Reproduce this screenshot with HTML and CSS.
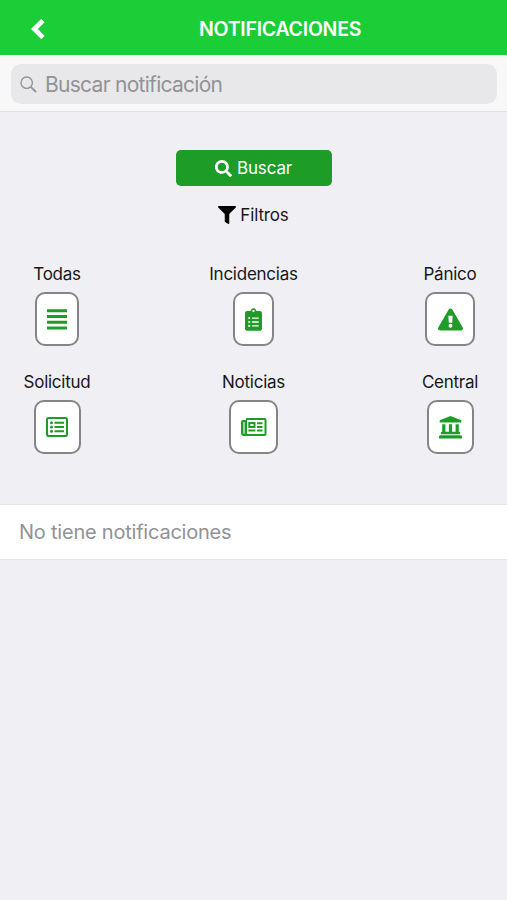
FILE: index.html
```html
<!DOCTYPE html>
<html lang="es">
<head>
<meta charset="utf-8">
<title>Notificaciones</title>
<link rel="stylesheet" href="styles.css">
</head>
<body>
<header class="navbar">
  <svg class="back" viewBox="0 0 14 20"><path d="M10.200 3.200 3.400 10l6.800 6.800" fill="none" stroke="#fff" stroke-width="4.800" stroke-linecap="square"/></svg>
  <h1 class="title">NOTIFICACIONES</h1>
</header>
<div class="searchbar">
  <div class="search-field">
    <svg class="search-icon" viewBox="0 0 17 17"><g fill="none" stroke="#929297" stroke-width="1.400"><circle cx="6.700" cy="6.700" r="5.700"/><path d="m10.800 10.800 5.200 5.200" stroke-width="1.900"/></g></svg>
    <span class="placeholder">Buscar notificación</span>
  </div>
</div>
<main>
  <button class="search-button">
    <svg class="glass" viewBox="0 0 512 512"><path fill="currentColor" d="M505 442.700 405.300 343c-4.500-4.500-10.600-7-17-7H372c27.600-35.300 44-79.700 44-128C416 93.100 322.900 0 208 0S0 93.100 0 208s93.100 208 208 208c48.300 0 92.700-16.400 128-44v16.300c0 6.400 2.500 12.500 7 17l99.700 99.700c9.400 9.400 24.600 9.400 33.900 0l28.300-28.300c9.400-9.400 9.400-24.600.1-34zM208 336c-70.700 0-128-57.200-128-128 0-70.700 57.200-128 128-128 70.700 0 128 57.200 128 128 0 70.700-57.200 128-128 128z"/></svg>
    <span>Buscar</span>
  </button>
  <div class="filters-title">
    <svg class="funnel" viewBox="0 0 512 512"><path d="M488 0H24C2.700 0-8 25.900 7.100 41L192 225.900V432c0 7.800 3.800 15.200 10.200 19.700l80 56C298 518.700 320 507.500 320 488V225.900L505 41C520 25.900 509.300 0 488 0z"/></svg>
    <span>Filtros</span>
  </div>
  <section class="filters">
    <div class="filter">
      <span class="label">Todas</span>
      <button class="tile w44"><svg width="20" height="21" viewBox="0 0 20 21"><path fill="currentColor" d="M0 .3h20v3H0zM0 6h20v3H0zM0 11.700h20v3H0zM0 17.400h20v3H0z"/></svg></button>
    </div>
    <div class="filter">
      <span class="label">Incidencias</span>
      <button class="tile w41"><svg width="17" height="23" viewBox="0 0 384 512"><path fill="currentColor" d="M336 64h-80c0-35.300-28.700-64-64-64s-64 28.700-64 64H48C21.500 64 0 85.500 0 112v352c0 26.500 21.500 48 48 48h288c26.500 0 48-21.500 48-48V112c0-26.500-21.500-48-48-48z"/><g fill="#fff"><circle cx="192" cy="64" r="26"/><circle cx="96" cy="224" r="24"/><circle cx="96" cy="312" r="24"/><circle cx="96" cy="400" r="24"/><path d="M160 208h150v32H160zM160 296h150v32H160zM160 384h150v32H160z"/></g></svg></button>
    </div>
    <div class="filter">
      <span class="label">Pánico</span>
      <button class="tile w50"><svg width="25" height="23" viewBox="0 0 576 512"><path fill="currentColor" d="M569.500 440c18.500 32-4.700 72-41.500 72H48c-36.900 0-60-40.100-41.600-72L246.400 24c18.500-32 64.700-32 83.200 0z"/><path fill="#fff" d="M239 168h98l-10 164h-78z"/><circle cx="288" cy="400" r="45" fill="#fff"/></svg></button>
    </div>
    <div class="filter">
      <span class="label">Solicitud</span>
      <button class="tile w47"><svg width="22" height="20" viewBox="0 0 22 20"><rect x="1" y="1" width="20" height="18" rx="1.800" fill="none" stroke="currentColor" stroke-width="2"/><g fill="currentColor"><circle cx="5.500" cy="5.800" r="1.500"/><circle cx="5.500" cy="10" r="1.500"/><circle cx="5.500" cy="14.200" r="1.500"/><path d="M8.500 4.800H18v2H8.500zM8.500 9H18v2H8.500zM8.500 13.200H18v2H8.500z"/></g></svg></button>
    </div>
    <div class="filter">
      <span class="label">Noticias</span>
      <button class="tile w49"><svg width="26" height="18" viewBox="0 0 26 18"><path d="M1 4q0-1 1-1h3v12q0 2-2 2-2 0-2-2z" fill="currentColor" fill-opacity=".45"/><path d="M5 2v13q0 2-2 2-2 0-2-2V4q0-1 1-1h3M5 1h18.500q1 0 1 1v14q0 1-1 1H3" fill="none" stroke="currentColor" stroke-width="2"/><path d="M8.300 5h5.200v4H8.300z" fill="none" stroke="currentColor" stroke-width="2"/><path fill="currentColor" d="M7.400 11.500h7v2h-7zM16 4.200h5.500v2H16zM16 7.900h5.500v2H16zM16 11.500h5.500v2H16z"/></svg></button>
    </div>
    <div class="filter">
      <span class="label">Central</span>
      <button class="tile w47"><svg width="23" height="23" viewBox="0 0 23 23"><path fill="currentColor" d="M11.500 0 22.300 4.200V6q0 .5-.7.500H1.400Q.700 6.500.7 6V4.200zM3.200 8.300h3.200v7.500h3.500V8.300h3.200v7.500h3.500V8.300h3.200v7.500q1.300 0 1.300 1.200v1.200H2V17q0-1.200 1.200-1.200zM1.400 19.300h20.200q1.400 0 1.400 1.500v1.700H0v-1.700q0-1.500 1.400-1.500z"/></svg></button>
    </div>
  </section>
  <div class="empty"><span>No tiene notificaciones</span></div>
</main>
</body>
</html>
```
FILE: styles.css
```css
* { box-sizing: border-box; }
body {
  margin: 0;
  min-height: 900px;
  background: #efeff4;
  color: #17171a;
  font-family: Inter, "Liberation Sans", sans-serif;
  font-size: 17px;
  letter-spacing: -0.150px;
}
button { border: 0; padding: 0; font: inherit; letter-spacing: inherit; }
svg { display: block; flex: none; }
.navbar {
  display: flex;
  align-items: center;
  height: 55px;
  padding: 2px 0 0 31px;
  background: #1bce38;
  color: #fff;
}
.back { width: 14px; height: 20px; }
.title {
  margin: 0 0 0 154px;
  font-size: 19.500px;
  font-weight: 600;
  line-height: 24px;
  letter-spacing: -0.250px;
}
.searchbar {
  height: 57px;
  padding: 9px 10px 0 11px;
  background: #f8f8f8;
  border-bottom: 1px solid #e0e0e3;
}
.search-field {
  display: flex;
  align-items: center;
  gap: 8px;
  height: 40px;
  padding-left: 9px;
  border-radius: 10px;
  background: #e8e8ea;
  color: #929295;
  font-size: 21px;
}
.search-icon { width: 17px; height: 17px; }
.placeholder { letter-spacing: -0.720px; }
main { padding-top: 38px; }
.search-button {
  display: flex;
  align-items: center;
  justify-content: center;
  gap: 5px;
  width: 156px;
  height: 36px;
  margin: 0 auto;
  border-radius: 5px;
  background: #1d9d27;
  color: #fff;
}
.glass { width: 17px; height: 17px; }
.filters-title {
  display: flex;
  align-items: center;
  justify-content: center;
  gap: 4px;
  height: 22px;
  margin-top: 18px;
}
.funnel { width: 18px; height: 18px; }
.filters {
  display: grid;
  grid-template-columns: 114px 1fr 114px;
  grid-auto-rows: 108px;
  height: 241px;
  margin-top: 37px;
}
.filter { display: flex; flex-direction: column; align-items: center; }
.label { height: 22px; line-height: 22px; margin-bottom: 7px; letter-spacing: -0.250px; }
.tile {
  display: flex;
  align-items: center;
  justify-content: center;
  height: 54px;
  border: 2px solid #858587;
  border-radius: 10px;
  background: #fff;
  color: #1d9d27;
}
.w41 { width: 41px; }
.w44 { width: 44px; }
.w47 { width: 47px; }
.w49 { width: 49px; }
.w50 { width: 50px; }
.empty {
  display: flex;
  align-items: center;
  height: 56px;
  padding-left: 19px;
  border: solid #e3e3e6;
  border-width: 1px 0;
  background: #fff;
  color: #929295;
  font-size: 20px;
  letter-spacing: -0.220px;
}
```
